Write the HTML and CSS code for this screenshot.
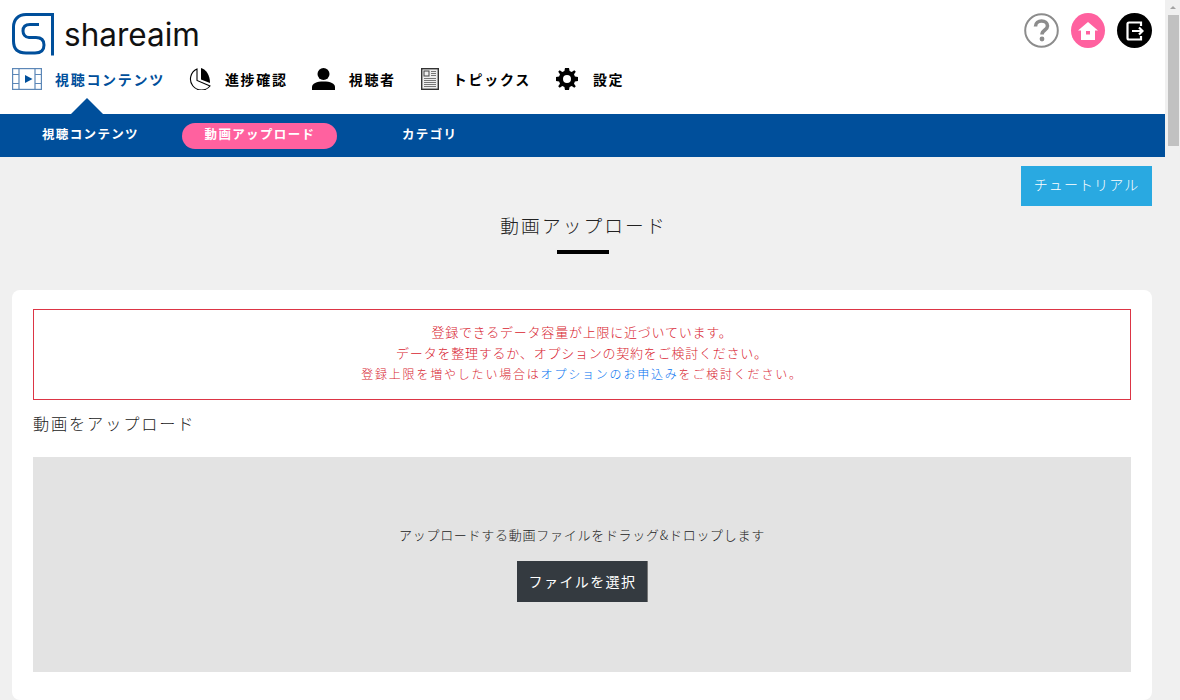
FILE: index.html
```html
<!DOCTYPE html>
<html lang="ja">
<head>
<meta charset="utf-8">
<title>shareaim</title>
<link rel="stylesheet" href="styles.css">
</head>
<body>
<div class="page">
  <div class="main">
    <header class="header">
      <div class="brand">
        <svg class="logo" width="42" height="43" viewBox="0 0 42 43" fill="none" stroke="#004f9b" stroke-width="3">
          <path d="M40.500 42.500V1.500H14C6 1.500 1.500 7 1.500 14V28C1.500 36 6 40 14 40H23C29 40 32 37 32 32C32 27 29 24.500 24 24.500H17C13 24.500 11 21 11 18C11 14 13.500 11.500 18 11.500H27"/>
        </svg>
        <span class="wordmark">shareaim</span>
      </div>
      <div class="tools">
        <span class="tool tool-help">
          <svg width="35" height="35" viewBox="0 0 35 35" fill="none">
            <circle cx="17.500" cy="17.500" r="16.300" stroke="#8c8c8c" stroke-width="2"/>
            <path d="M11.500 13.500C11.500 9.800 14.500 8 17.500 8C21 8 23.500 10 23.500 13C23.500 17 18 17 18 21.500" stroke="#8c8c8c" stroke-width="3.600"/>
            <circle cx="18" cy="26" r="2.400" fill="#8c8c8c"/>
          </svg>
        </span>
        <span class="tool tool-home">
          <svg width="20" height="18" viewBox="0 0 20 18">
            <path fill="#fff" fill-rule="evenodd" d="M10 0L20 8.500H17V18H3V8.500H0ZM8 9V12.500H12V9Z"/>
          </svg>
        </span>
        <span class="tool tool-exit">
          <svg width="18" height="20" viewBox="0 0 18 20" fill="none" stroke="#fff" stroke-width="2.200">
            <path d="M15 5V1.500H3C2 1.500 1.500 2 1.500 3V17C1.500 18 2 18.500 3 18.500H15V15"/>
            <path d="M6 10H16.500M13 6.500L16.500 10L13 13.500"/>
          </svg>
        </span>
      </div>
      <nav class="nav">
        <a class="nav-item nav-item-active">
          <svg class="nav-icon" width="30" height="22" viewBox="0 0 30 22" fill="none" stroke="#5c87b7" stroke-width="1.200">
            <rect x="0.600" y="0.600" width="28.800" height="20.800"/>
            <path d="M7 0.600V21.400M23 0.600V21.400M0.600 6.500H7M0.600 15.500H7M23 6.500H29.400M23 15.500H29.400"/>
            <path d="M13 7L20.500 11L13 15Z" fill="#004f9b" stroke="none"/>
          </svg>
          <span class="nav-label">視聴コンテンツ</span>
        </a>
        <a class="nav-item nav-item-progress">
          <svg class="nav-icon" width="22" height="22" viewBox="0 0 22 22" fill="none">
            <path d="M8 1A11 11 0 1 0 21 18L8 12.500Z" stroke="#000" stroke-width="1.100"/>
            <path d="M12 0C17 1.500 21 7 21 15L12 11.500Z" fill="#000"/>
          </svg>
          <span class="nav-label">進捗確認</span>
        </a>
        <a class="nav-item nav-item-viewer">
          <svg class="nav-icon" width="23" height="22" viewBox="0 0 23 22">
            <ellipse cx="11.500" cy="6" rx="6" ry="6" fill="#000"/>
            <path d="M0 22V19C0 15.500 4.500 13.500 11.500 13.500C18.500 13.500 23 15.500 23 19V22Z" fill="#000"/>
          </svg>
          <span class="nav-label">視聴者</span>
        </a>
        <a class="nav-item nav-item-topics">
          <svg class="nav-icon" width="18" height="22" viewBox="0 0 18 22" fill="none">
            <rect x="0.700" y="0.700" width="16.600" height="20.600" fill="#eee" stroke="#333" stroke-width="1.400"/>
            <rect x="3" y="3" width="5" height="5" stroke="#444"/>
            <path d="M10 3.500H15M10 5.500H15M10 7.500H15M3 10.500H15M3 12.500H15M3 14.500H15M3 16.500H15M3 18.500H15" stroke="#777"/>
          </svg>
          <span class="nav-label">トピックス</span>
        </a>
        <a class="nav-item nav-item-settings">
          <svg class="nav-icon" width="22" height="22" viewBox="0 0 22 22">
            <path fill="#000" fill-rule="evenodd" d="M9 0H13L13.600 3.100L15.700 4L18.300 2.200L19.800 3.700L18 6.300L18.900 8.400L22 9V13L18.900 13.600L18 15.700L19.800 18.300L18.300 19.800L15.700 18L13.600 18.900L13 22H9L8.400 18.900L6.300 18L3.700 19.800L2.200 18.300L4 15.700L3.100 13.600L0 13V9L3.100 8.400L4 6.300L2.200 3.700L3.700 2.200L6.300 4L8.400 3.100ZM11 7A4 4 0 1 0 11 15A4 4 0 1 0 11 7Z"/>
          </svg>
          <span class="nav-label">設定</span>
        </a>
      </nav>
    </header>
    <div class="subnav">
      <a class="sub-item sub-item-contents">視聴コンテンツ</a>
      <a class="sub-item sub-item-upload">動画アップロード</a>
      <a class="sub-item sub-item-category">カテゴリ</a>
    </div>
    <main class="content">
      <div class="tutorial-row"><a class="tutorial">チュートリアル</a></div>
      <h1 class="page-title">動画アップロード</h1>
      <div class="title-rule"></div>
      <section class="card">
        <div class="alert">
          <p>登録できるデータ容量が上限に近づいています。</p>
          <p>データを整理するか、オプションの契約をご検討ください。</p>
          <p class="alert-small">登録上限を増やしたい場合は<a class="alert-link">オプションのお申込み</a>をご検討ください。</p>
        </div>
        <h2 class="section-title">動画をアップロード</h2>
        <div class="dropzone">
          <p class="drop-text">アップロードする動画ファイルをドラッグ&amp;ドロップします</p>
          <button class="file-button" type="button">ファイルを選択</button>
        </div>
      </section>
    </main>
  </div>
  <div class="scrollbar">
    <span class="scroll-arrow"></span>
    <span class="scroll-thumb"></span>
  </div>
</div>
</body>
</html>
```
FILE: styles.css
```css
* { box-sizing: border-box; }
html, body { margin: 0; height: 700px; overflow: hidden; }
body {
  font-family: "Noto Sans CJK JP", "Noto Sans", sans-serif;
  background: #f0f0f0;
  color: #333;
}
p, h1, h2 { margin: 0; font-weight: 300; }
.page { display: flex; height: 700px; }
.main { width: 1165px; flex: none; }
.header {
  position: relative;
  height: 114px;
  background: #fff;
  padding: 13px 13px 0 12px;
}
.brand { display: flex; align-items: center; height: 42px; }
.logo { flex: none; }
.wordmark {
  margin-left: 10px;
  font-family: "Inter", sans-serif;
  font-size: 31.500px;
  color: #111;
  line-height: 42px;
  padding-top: 2px;
}
.tools {
  position: absolute;
  top: 13px;
  right: 13px;
  display: flex;
  gap: 12px;
}
.tool {
  width: 35px;
  height: 35px;
  border-radius: 50%;
  display: flex;
  align-items: center;
  justify-content: center;
}
.tool-home { background: #ff619f; width: 34px; }
.tool-exit { background: #000; }
.nav { display: flex; margin-top: 12px; height: 24px; align-items: center; }
.nav-item {
  position: relative;
  display: flex;
  align-items: center;
  color: #000;
  font-size: 14px;
  font-weight: 700;
  letter-spacing: 1.700px;
}
.nav-label { white-space: nowrap; line-height: 20px; }
.nav-item-active { color: #004f9b; margin-right: 24px; }
.nav-item-active .nav-label { margin-left: 13px; }
.nav-item-active::after {
  content: "";
  position: absolute;
  left: 58px;
  top: 30px;
  border-left: 17px solid transparent;
  border-right: 17px solid transparent;
  border-bottom: 17px solid #004f9b;
}
.nav-item-progress { margin-right: 24px; }
.nav-item-progress .nav-label { margin-left: 14px; }
.nav-item-viewer { margin-right: 25px; }
.nav-item-viewer .nav-label { margin-left: 14px; }
.nav-item-topics { margin-right: 25px; }
.nav-item-topics .nav-label { margin-left: 14px; }
.nav-item-settings .nav-label { margin-left: 15px; }
.subnav {
  display: flex;
  align-items: center;
  height: 43px;
  background: #004f9b;
  color: #fff;
  font-size: 12.500px;
  font-weight: 700;
  letter-spacing: 1.350px;
}
.sub-item { white-space: nowrap; padding-bottom: 4px; }
.sub-item-contents { margin-left: 42px; }
.sub-item-upload {
  margin-left: 43px;
  width: 155px;
  height: 26px;
  padding: 0 0 0 1px;
  line-height: 22px;
  text-align: center;
  background: #ff619f;
  border-radius: 13px;
}
.sub-item-category { margin-left: 65px; }
.content { padding: 9px 13px 0 12px; }
.tutorial-row { display: flex; justify-content: flex-end; }
.tutorial {
  width: 131px;
  height: 40px;
  line-height: 37px;
  text-align: center;
  background: #29a9e1;
  color: #fff;
  font-size: 14px;
  font-weight: 300;
  letter-spacing: 1.100px;
}
.page-title {
  margin-top: 5px;
  padding-left: 3px;
  text-align: center;
  font-size: 18.720px;
  line-height: 28px;
  letter-spacing: 2.100px;
  color: #222;
}
.title-rule { width: 52px; height: 4px; margin: 11px 0 0 545px; background: #000; }
.card {
  margin-top: 36px;
  background: #fff;
  border-radius: 8px;
  padding: 19px 21px 28px;
}
.alert {
  height: 91px;
  border: 1px solid #dc3545;
  padding-top: 11px;
  text-align: center;
  color: #d81c30;
  font-size: 13px;
  letter-spacing: 0.780px;
  line-height: 21px;
}
.alert-small { font-size: 12px; letter-spacing: 1.800px; }
.alert-link { color: #0070f0; }
.section-title {
  margin-top: 11px;
  font-size: 16.200px;
  line-height: 24px;
  letter-spacing: 1.850px;
  color: #222;
}
.dropzone {
  margin-top: 22px;
  height: 215px;
  background: #e3e3e3;
  display: flex;
  flex-direction: column;
  align-items: center;
  padding-top: 68px;
}
.drop-text { font-size: 13px; line-height: 20px; letter-spacing: 0.730px; color: #222; }
.file-button {
  margin-top: 16px;
  width: 131px;
  height: 41px;
  border: 0;
  border-right: 1px solid #777;
  background: #343a40;
  color: #fff;
  font-family: inherit;
  font-size: 14px;
  font-weight: 400;
  letter-spacing: 1.400px;
  padding: 0 0 2px 2px;
}
.scrollbar {
  width: 15px;
  flex: none;
  background: #f0f0f0;
  display: flex;
  flex-direction: column;
  align-items: center;
}
.scroll-arrow {
  margin-top: 6px;
  border-left: 3.500px solid transparent;
  border-right: 3.500px solid transparent;
  border-bottom: 3px solid #a3a3a3;
}
.scroll-thumb {
  margin-top: 6px;
  width: 11px;
  height: 131px;
  margin-left: 1px;
  background: #c1c1c1;
}
```
